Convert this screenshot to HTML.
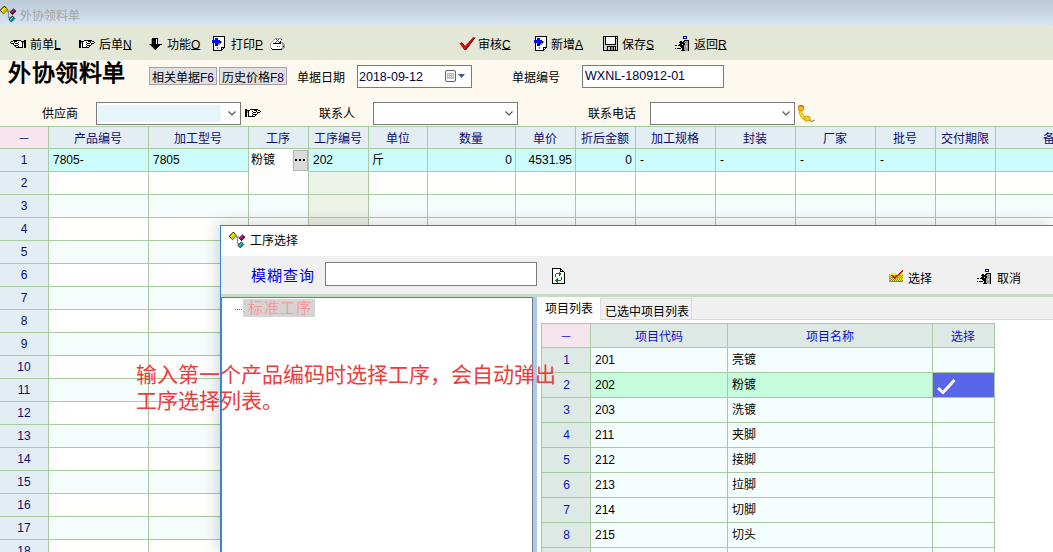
<!DOCTYPE html><html lang="zh-CN"><head><meta charset="utf-8"><style>
html,body{margin:0;padding:0;}body{width:1053px;height:552px;overflow:hidden;position:relative;background:#fff;font-family:"Liberation Sans",sans-serif;font-size:12px;color:#000;font-weight:500;}
u{text-decoration:underline;text-underline-offset:0px;}
</style></head><body>
<div style="position:absolute;left:0px;top:0px;width:1053px;height:26px;background:linear-gradient(#bbc9d8,#d8e4f1);"></div>
<svg style="position:absolute;left:0px;top:0px" width="17" height="23" viewBox="0 0 17 23" shape-rendering="crispEdges"><g shape-rendering="geometricPrecision" stroke="#000" stroke-width="1" stroke-linejoin="miter"><path d="M7 11.1 L10.9 11.1 M8.5 11.1 L8.5 17.4 L10 17.4" fill="none" stroke="#8a8a8a" stroke-width="1.2"/><path d="M4.4 6.1 L7.7 9.6 L3.5 13.7 L0.2 10.3 Z" fill="#f4ec00"/><path d="M6 7.8 L7.7 9.6 L3.5 13.7 L2 12 Z" fill="#c8c000" stroke="none"/><path d="M13.5 9 L15.9 11.3 L12.4 14.6 L10.3 12.2 Z" fill="#e010d0"/><path d="M14.7 10.2 L15.9 11.3 L12.4 14.6 L11.3 13.4 Z" fill="#a00020" stroke="none"/><path d="M12.4 16.1 L14.8 18.5 L11.3 21.8 L9 19.4 Z" fill="#10e0f0"/><path d="M13.6 17.3 L14.8 18.5 L11.3 21.8 L10.1 20.6 Z" fill="#109898" stroke="none"/></g></svg>
<div style="position:absolute;left:20px;top:9px;line-height:14px;white-space:nowrap;color:#a4a4a4;font-size:12px;">外协领料单</div>
<div style="position:absolute;left:0px;top:26px;width:1053px;height:34px;background:#e3e7d6;"></div>
<svg style="position:absolute;left:10px;top:40px" width="16" height="8" shape-rendering="crispEdges"><rect x="3" y="0" width="8" height="1" fill="#000000"/><rect x="14" y="0" width="2" height="1" fill="#000000"/><rect x="1" y="1" width="2" height="1" fill="#000000"/><rect x="3" y="1" width="1" height="1" fill="#ffffff"/><rect x="4" y="1" width="3" height="1" fill="#000000"/><rect x="7" y="1" width="4" height="1" fill="#ffffff"/><rect x="11" y="1" width="5" height="1" fill="#000000"/><rect x="0" y="2" width="1" height="1" fill="#000000"/><rect x="1" y="2" width="3" height="1" fill="#ffffff"/><rect x="4" y="2" width="1" height="1" fill="#000000"/><rect x="5" y="2" width="3" height="1" fill="#ffffff"/><rect x="8" y="2" width="1" height="1" fill="#000000"/><rect x="9" y="2" width="3" height="1" fill="#ffffff"/><rect x="12" y="2" width="1" height="1" fill="#000000"/><rect x="13" y="2" width="1" height="1" fill="#00e8f0"/><rect x="14" y="2" width="2" height="1" fill="#000000"/><rect x="1" y="3" width="3" height="1" fill="#000000"/><rect x="4" y="3" width="1" height="1" fill="#ffffff"/><rect x="5" y="3" width="3" height="1" fill="#000000"/><rect x="8" y="3" width="4" height="1" fill="#ffffff"/><rect x="12" y="3" width="1" height="1" fill="#000000"/><rect x="13" y="3" width="1" height="1" fill="#00e8f0"/><rect x="14" y="3" width="2" height="1" fill="#000000"/><rect x="3" y="4" width="1" height="1" fill="#000000"/><rect x="4" y="4" width="4" height="1" fill="#ffffff"/><rect x="8" y="4" width="1" height="1" fill="#000000"/><rect x="9" y="4" width="3" height="1" fill="#ffffff"/><rect x="12" y="4" width="1" height="1" fill="#000000"/><rect x="13" y="4" width="1" height="1" fill="#ffffff"/><rect x="14" y="4" width="2" height="1" fill="#000000"/><rect x="4" y="5" width="4" height="1" fill="#000000"/><rect x="8" y="5" width="4" height="1" fill="#ffffff"/><rect x="12" y="5" width="1" height="1" fill="#000000"/><rect x="13" y="5" width="1" height="1" fill="#ffffff"/><rect x="14" y="5" width="2" height="1" fill="#000000"/><rect x="5" y="6" width="1" height="1" fill="#000000"/><rect x="6" y="6" width="2" height="1" fill="#ffffff"/><rect x="8" y="6" width="1" height="1" fill="#000000"/><rect x="9" y="6" width="3" height="1" fill="#ffffff"/><rect x="12" y="6" width="1" height="1" fill="#000000"/><rect x="14" y="6" width="2" height="1" fill="#000000"/><rect x="6" y="7" width="7" height="1" fill="#000000"/><rect x="14" y="7" width="2" height="1" fill="#000000"/></svg>
<div style="position:absolute;left:30px;top:38px;line-height:14px;white-space:nowrap;">前单<u>L</u></div>
<svg style="position:absolute;left:79px;top:40px" width="16" height="8" shape-rendering="crispEdges"><rect x="0" y="0" width="2" height="1" fill="#000000"/><rect x="5" y="0" width="8" height="1" fill="#000000"/><rect x="0" y="1" width="5" height="1" fill="#000000"/><rect x="5" y="1" width="4" height="1" fill="#ffffff"/><rect x="9" y="1" width="3" height="1" fill="#000000"/><rect x="12" y="1" width="1" height="1" fill="#ffffff"/><rect x="13" y="1" width="2" height="1" fill="#000000"/><rect x="0" y="2" width="2" height="1" fill="#000000"/><rect x="2" y="2" width="1" height="1" fill="#00e8f0"/><rect x="3" y="2" width="1" height="1" fill="#000000"/><rect x="4" y="2" width="3" height="1" fill="#ffffff"/><rect x="7" y="2" width="1" height="1" fill="#000000"/><rect x="8" y="2" width="3" height="1" fill="#ffffff"/><rect x="11" y="2" width="1" height="1" fill="#000000"/><rect x="12" y="2" width="3" height="1" fill="#ffffff"/><rect x="15" y="2" width="1" height="1" fill="#000000"/><rect x="0" y="3" width="2" height="1" fill="#000000"/><rect x="2" y="3" width="1" height="1" fill="#00e8f0"/><rect x="3" y="3" width="1" height="1" fill="#000000"/><rect x="4" y="3" width="4" height="1" fill="#ffffff"/><rect x="8" y="3" width="3" height="1" fill="#000000"/><rect x="11" y="3" width="1" height="1" fill="#ffffff"/><rect x="12" y="3" width="3" height="1" fill="#000000"/><rect x="0" y="4" width="2" height="1" fill="#000000"/><rect x="2" y="4" width="1" height="1" fill="#ffffff"/><rect x="3" y="4" width="1" height="1" fill="#000000"/><rect x="4" y="4" width="3" height="1" fill="#ffffff"/><rect x="7" y="4" width="1" height="1" fill="#000000"/><rect x="8" y="4" width="4" height="1" fill="#ffffff"/><rect x="12" y="4" width="1" height="1" fill="#000000"/><rect x="0" y="5" width="2" height="1" fill="#000000"/><rect x="2" y="5" width="1" height="1" fill="#ffffff"/><rect x="3" y="5" width="1" height="1" fill="#000000"/><rect x="4" y="5" width="4" height="1" fill="#ffffff"/><rect x="8" y="5" width="4" height="1" fill="#000000"/><rect x="0" y="6" width="2" height="1" fill="#000000"/><rect x="3" y="6" width="1" height="1" fill="#000000"/><rect x="4" y="6" width="3" height="1" fill="#ffffff"/><rect x="7" y="6" width="1" height="1" fill="#000000"/><rect x="8" y="6" width="2" height="1" fill="#ffffff"/><rect x="10" y="6" width="1" height="1" fill="#000000"/><rect x="0" y="7" width="2" height="1" fill="#000000"/><rect x="3" y="7" width="7" height="1" fill="#000000"/></svg>
<div style="position:absolute;left:99px;top:38px;line-height:14px;white-space:nowrap;">后单<u>N</u></div>
<svg style="position:absolute;left:149px;top:38px" width="13" height="12" shape-rendering="crispEdges"><rect x="3" y="0" width="6" height="1" fill="#000000"/><rect x="2" y="1" width="1" height="1" fill="#a0a0a0"/><rect x="3" y="1" width="4" height="1" fill="#000000"/><rect x="7" y="1" width="1" height="1" fill="#ffffff"/><rect x="8" y="1" width="1" height="1" fill="#000000"/><rect x="2" y="2" width="1" height="1" fill="#a0a0a0"/><rect x="3" y="2" width="4" height="1" fill="#000000"/><rect x="7" y="2" width="1" height="1" fill="#ffffff"/><rect x="8" y="2" width="1" height="1" fill="#000000"/><rect x="2" y="3" width="1" height="1" fill="#a0a0a0"/><rect x="3" y="3" width="4" height="1" fill="#000000"/><rect x="7" y="3" width="1" height="1" fill="#ffffff"/><rect x="8" y="3" width="1" height="1" fill="#000000"/><rect x="2" y="4" width="1" height="1" fill="#a0a0a0"/><rect x="3" y="4" width="4" height="1" fill="#000000"/><rect x="7" y="4" width="1" height="1" fill="#ffffff"/><rect x="8" y="4" width="1" height="1" fill="#000000"/><rect x="2" y="5" width="1" height="1" fill="#a0a0a0"/><rect x="3" y="5" width="4" height="1" fill="#000000"/><rect x="7" y="5" width="1" height="1" fill="#ffffff"/><rect x="8" y="5" width="1" height="1" fill="#000000"/><rect x="0" y="6" width="1" height="1" fill="#909000"/><rect x="1" y="6" width="12" height="1" fill="#000000"/><rect x="1" y="7" width="1" height="1" fill="#a0a0a0"/><rect x="2" y="7" width="9" height="1" fill="#000000"/><rect x="11" y="7" width="1" height="1" fill="#ffffff"/><rect x="2" y="8" width="1" height="1" fill="#a0a0a0"/><rect x="3" y="8" width="7" height="1" fill="#000000"/><rect x="10" y="8" width="1" height="1" fill="#ffffff"/><rect x="3" y="9" width="1" height="1" fill="#a0a0a0"/><rect x="4" y="9" width="5" height="1" fill="#000000"/><rect x="9" y="9" width="1" height="1" fill="#ffffff"/><rect x="4" y="10" width="1" height="1" fill="#a0a0a0"/><rect x="5" y="10" width="3" height="1" fill="#000000"/><rect x="8" y="10" width="1" height="1" fill="#ffffff"/><rect x="5" y="11" width="1" height="1" fill="#a0a0a0"/><rect x="6" y="11" width="1" height="1" fill="#000000"/><rect x="7" y="11" width="1" height="1" fill="#ffffff"/></svg>
<div style="position:absolute;left:167px;top:38px;line-height:14px;white-space:nowrap;">功能<u>O</u></div>
<svg style="position:absolute;left:211px;top:36px" width="14" height="15" shape-rendering="crispEdges"><rect x="2" y="0" width="12" height="1" fill="#000000"/><rect x="2" y="1" width="1" height="1" fill="#000000"/><rect x="3" y="1" width="10" height="1" fill="#ffffff"/><rect x="13" y="1" width="1" height="1" fill="#000000"/><rect x="2" y="2" width="1" height="1" fill="#000000"/><rect x="3" y="2" width="1" height="1" fill="#ffffff"/><rect x="4" y="2" width="3" height="1" fill="#0010f0"/><rect x="7" y="2" width="6" height="1" fill="#ffffff"/><rect x="13" y="2" width="1" height="1" fill="#000000"/><rect x="2" y="3" width="1" height="1" fill="#000000"/><rect x="3" y="3" width="1" height="1" fill="#ffffff"/><rect x="4" y="3" width="3" height="1" fill="#0010f0"/><rect x="7" y="3" width="6" height="1" fill="#ffffff"/><rect x="13" y="3" width="1" height="1" fill="#000000"/><rect x="1" y="4" width="8" height="1" fill="#0010f0"/><rect x="9" y="4" width="4" height="1" fill="#ffffff"/><rect x="13" y="4" width="1" height="1" fill="#000000"/><rect x="1" y="5" width="8" height="1" fill="#0010f0"/><rect x="9" y="5" width="1" height="1" fill="#000000"/><rect x="10" y="5" width="1" height="1" fill="#a0a0a0"/><rect x="11" y="5" width="2" height="1" fill="#ffffff"/><rect x="13" y="5" width="1" height="1" fill="#000000"/><rect x="1" y="6" width="8" height="1" fill="#0010f0"/><rect x="9" y="6" width="1" height="1" fill="#000000"/><rect x="10" y="6" width="1" height="1" fill="#a0a0a0"/><rect x="11" y="6" width="2" height="1" fill="#ffffff"/><rect x="13" y="6" width="1" height="1" fill="#000000"/><rect x="2" y="7" width="1" height="1" fill="#000000"/><rect x="3" y="7" width="1" height="1" fill="#ffffff"/><rect x="4" y="7" width="3" height="1" fill="#0010f0"/><rect x="7" y="7" width="1" height="1" fill="#000000"/><rect x="8" y="7" width="2" height="1" fill="#a0a0a0"/><rect x="10" y="7" width="3" height="1" fill="#ffffff"/><rect x="13" y="7" width="1" height="1" fill="#000000"/><rect x="2" y="8" width="1" height="1" fill="#000000"/><rect x="3" y="8" width="1" height="1" fill="#ffffff"/><rect x="4" y="8" width="3" height="1" fill="#0010f0"/><rect x="7" y="8" width="2" height="1" fill="#a0a0a0"/><rect x="9" y="8" width="4" height="1" fill="#ffffff"/><rect x="13" y="8" width="1" height="1" fill="#000000"/><rect x="2" y="9" width="1" height="1" fill="#000000"/><rect x="3" y="9" width="1" height="1" fill="#ffffff"/><rect x="4" y="9" width="3" height="1" fill="#000000"/><rect x="7" y="9" width="6" height="1" fill="#ffffff"/><rect x="13" y="9" width="1" height="1" fill="#000000"/><rect x="2" y="10" width="1" height="1" fill="#000000"/><rect x="3" y="10" width="10" height="1" fill="#ffffff"/><rect x="13" y="10" width="1" height="1" fill="#000000"/><rect x="2" y="11" width="1" height="1" fill="#000000"/><rect x="3" y="11" width="2" height="1" fill="#ffffff"/><rect x="5" y="11" width="1" height="1" fill="#e0c0e0"/><rect x="6" y="11" width="1" height="1" fill="#10e010"/><rect x="7" y="11" width="1" height="1" fill="#e0c0e0"/><rect x="8" y="11" width="2" height="1" fill="#ffffff"/><rect x="10" y="11" width="4" height="1" fill="#000000"/><rect x="2" y="12" width="1" height="1" fill="#000000"/><rect x="3" y="12" width="3" height="1" fill="#ffffff"/><rect x="6" y="12" width="1" height="1" fill="#10e010"/><rect x="7" y="12" width="3" height="1" fill="#ffffff"/><rect x="10" y="12" width="1" height="1" fill="#000000"/><rect x="11" y="12" width="1" height="1" fill="#ffffff"/><rect x="12" y="12" width="1" height="1" fill="#000000"/><rect x="2" y="13" width="1" height="1" fill="#000000"/><rect x="3" y="13" width="7" height="1" fill="#ffffff"/><rect x="10" y="13" width="2" height="1" fill="#000000"/><rect x="2" y="14" width="9" height="1" fill="#000000"/></svg>
<div style="position:absolute;left:231px;top:38px;line-height:14px;white-space:nowrap;">打印<u>P</u></div>
<svg style="position:absolute;left:270px;top:38px" width="15" height="12" shape-rendering="crispEdges"><rect x="5" y="0" width="7" height="1" fill="#a0a0a0"/><rect x="4" y="1" width="1" height="1" fill="#a0a0a0"/><rect x="5" y="1" width="1" height="1" fill="#ffffff"/><rect x="6" y="1" width="1" height="1" fill="#f00000"/><rect x="7" y="1" width="1" height="1" fill="#ffffff"/><rect x="8" y="1" width="1" height="1" fill="#f00000"/><rect x="9" y="1" width="2" height="1" fill="#ffffff"/><rect x="11" y="1" width="1" height="1" fill="#000000"/><rect x="3" y="2" width="1" height="1" fill="#a0a0a0"/><rect x="4" y="2" width="3" height="1" fill="#ffffff"/><rect x="7" y="2" width="1" height="1" fill="#f00000"/><rect x="8" y="2" width="3" height="1" fill="#ffffff"/><rect x="2" y="3" width="1" height="1" fill="#a0a0a0"/><rect x="3" y="3" width="3" height="1" fill="#ffffff"/><rect x="6" y="3" width="1" height="1" fill="#f00000"/><rect x="7" y="3" width="1" height="1" fill="#ffffff"/><rect x="8" y="3" width="1" height="1" fill="#f00000"/><rect x="9" y="3" width="1" height="1" fill="#ffffff"/><rect x="10" y="3" width="1" height="1" fill="#000000"/><rect x="1" y="4" width="1" height="1" fill="#a0a0a0"/><rect x="2" y="4" width="3" height="1" fill="#ffffff"/><rect x="5" y="4" width="1" height="1" fill="#f00000"/><rect x="6" y="4" width="3" height="1" fill="#ffffff"/><rect x="9" y="4" width="1" height="1" fill="#f00000"/><rect x="10" y="4" width="1" height="1" fill="#000000"/><rect x="11" y="4" width="2" height="1" fill="#a0a0a0"/><rect x="0" y="5" width="1" height="1" fill="#a0a0a0"/><rect x="1" y="5" width="2" height="1" fill="#ffffff"/><rect x="3" y="5" width="8" height="1" fill="#000000"/><rect x="11" y="5" width="1" height="1" fill="#ffffff"/><rect x="12" y="5" width="2" height="1" fill="#a0a0a0"/><rect x="0" y="6" width="1" height="1" fill="#a0a0a0"/><rect x="1" y="6" width="11" height="1" fill="#ffffff"/><rect x="12" y="6" width="3" height="1" fill="#a0a0a0"/><rect x="0" y="7" width="1" height="1" fill="#a0a0a0"/><rect x="1" y="7" width="11" height="1" fill="#ffffff"/><rect x="12" y="7" width="3" height="1" fill="#a0a0a0"/><rect x="0" y="8" width="1" height="1" fill="#a0a0a0"/><rect x="1" y="8" width="6" height="1" fill="#ffffff"/><rect x="7" y="8" width="1" height="1" fill="#f00000"/><rect x="8" y="8" width="1" height="1" fill="#ffffff"/><rect x="9" y="8" width="1" height="1" fill="#f00000"/><rect x="10" y="8" width="2" height="1" fill="#ffffff"/><rect x="12" y="8" width="1" height="1" fill="#a0a0a0"/><rect x="13" y="8" width="1" height="1" fill="#000000"/><rect x="14" y="8" width="1" height="1" fill="#a0a0a0"/><rect x="0" y="9" width="1" height="1" fill="#a0a0a0"/><rect x="1" y="9" width="11" height="1" fill="#ffffff"/><rect x="12" y="9" width="3" height="1" fill="#a0a0a0"/><rect x="1" y="10" width="1" height="1" fill="#000000"/><rect x="2" y="10" width="9" height="1" fill="#ffffff"/><rect x="11" y="10" width="3" height="1" fill="#a0a0a0"/><rect x="2" y="11" width="10" height="1" fill="#000000"/><rect x="12" y="11" width="1" height="1" fill="#a0a0a0"/></svg>
<svg style="position:absolute;left:457px;top:35px" width="20" height="17" viewBox="0 0 20 17" shape-rendering="crispEdges"><g shape-rendering="geometricPrecision"><path d="M2.5 8.2 L4.2 7.6 L8 11 L16.2 2 L18 2.6 L8.6 15 L7.2 15 Z" fill="#f00000"/><path d="M18 2.6 L8.6 15" stroke="#000" stroke-width="1" fill="none"/><path d="M4.2 7.4 L7.5 10.5" stroke="#000" stroke-width="0.9" fill="none"/></g></svg>
<div style="position:absolute;left:478px;top:38px;line-height:14px;white-space:nowrap;">审核<u>C</u></div>
<svg style="position:absolute;left:533px;top:36px" width="14" height="15" shape-rendering="crispEdges"><rect x="2" y="0" width="12" height="1" fill="#000000"/><rect x="2" y="1" width="1" height="1" fill="#000000"/><rect x="3" y="1" width="10" height="1" fill="#ffffff"/><rect x="13" y="1" width="1" height="1" fill="#000000"/><rect x="2" y="2" width="1" height="1" fill="#000000"/><rect x="3" y="2" width="1" height="1" fill="#ffffff"/><rect x="4" y="2" width="3" height="1" fill="#0010f0"/><rect x="7" y="2" width="6" height="1" fill="#ffffff"/><rect x="13" y="2" width="1" height="1" fill="#000000"/><rect x="2" y="3" width="1" height="1" fill="#000000"/><rect x="3" y="3" width="1" height="1" fill="#ffffff"/><rect x="4" y="3" width="3" height="1" fill="#0010f0"/><rect x="7" y="3" width="6" height="1" fill="#ffffff"/><rect x="13" y="3" width="1" height="1" fill="#000000"/><rect x="1" y="4" width="8" height="1" fill="#0010f0"/><rect x="9" y="4" width="4" height="1" fill="#ffffff"/><rect x="13" y="4" width="1" height="1" fill="#000000"/><rect x="1" y="5" width="8" height="1" fill="#0010f0"/><rect x="9" y="5" width="1" height="1" fill="#000000"/><rect x="10" y="5" width="1" height="1" fill="#a0a0a0"/><rect x="11" y="5" width="2" height="1" fill="#ffffff"/><rect x="13" y="5" width="1" height="1" fill="#000000"/><rect x="1" y="6" width="8" height="1" fill="#0010f0"/><rect x="9" y="6" width="1" height="1" fill="#000000"/><rect x="10" y="6" width="1" height="1" fill="#a0a0a0"/><rect x="11" y="6" width="2" height="1" fill="#ffffff"/><rect x="13" y="6" width="1" height="1" fill="#000000"/><rect x="2" y="7" width="1" height="1" fill="#000000"/><rect x="3" y="7" width="1" height="1" fill="#ffffff"/><rect x="4" y="7" width="3" height="1" fill="#0010f0"/><rect x="7" y="7" width="1" height="1" fill="#000000"/><rect x="8" y="7" width="2" height="1" fill="#a0a0a0"/><rect x="10" y="7" width="3" height="1" fill="#ffffff"/><rect x="13" y="7" width="1" height="1" fill="#000000"/><rect x="2" y="8" width="1" height="1" fill="#000000"/><rect x="3" y="8" width="1" height="1" fill="#ffffff"/><rect x="4" y="8" width="3" height="1" fill="#0010f0"/><rect x="7" y="8" width="2" height="1" fill="#a0a0a0"/><rect x="9" y="8" width="4" height="1" fill="#ffffff"/><rect x="13" y="8" width="1" height="1" fill="#000000"/><rect x="2" y="9" width="1" height="1" fill="#000000"/><rect x="3" y="9" width="1" height="1" fill="#ffffff"/><rect x="4" y="9" width="3" height="1" fill="#000000"/><rect x="7" y="9" width="6" height="1" fill="#ffffff"/><rect x="13" y="9" width="1" height="1" fill="#000000"/><rect x="2" y="10" width="1" height="1" fill="#000000"/><rect x="3" y="10" width="10" height="1" fill="#ffffff"/><rect x="13" y="10" width="1" height="1" fill="#000000"/><rect x="2" y="11" width="1" height="1" fill="#000000"/><rect x="3" y="11" width="2" height="1" fill="#ffffff"/><rect x="5" y="11" width="1" height="1" fill="#e0c0e0"/><rect x="6" y="11" width="1" height="1" fill="#10e010"/><rect x="7" y="11" width="1" height="1" fill="#e0c0e0"/><rect x="8" y="11" width="2" height="1" fill="#ffffff"/><rect x="10" y="11" width="4" height="1" fill="#000000"/><rect x="2" y="12" width="1" height="1" fill="#000000"/><rect x="3" y="12" width="3" height="1" fill="#ffffff"/><rect x="6" y="12" width="1" height="1" fill="#10e010"/><rect x="7" y="12" width="3" height="1" fill="#ffffff"/><rect x="10" y="12" width="1" height="1" fill="#000000"/><rect x="11" y="12" width="1" height="1" fill="#ffffff"/><rect x="12" y="12" width="1" height="1" fill="#000000"/><rect x="2" y="13" width="1" height="1" fill="#000000"/><rect x="3" y="13" width="7" height="1" fill="#ffffff"/><rect x="10" y="13" width="2" height="1" fill="#000000"/><rect x="2" y="14" width="9" height="1" fill="#000000"/></svg>
<div style="position:absolute;left:551px;top:38px;line-height:14px;white-space:nowrap;">新增<u>A</u></div>
<svg style="position:absolute;left:603px;top:36px" width="15" height="15" shape-rendering="crispEdges"><rect x="0" y="0" width="15" height="1" fill="#000000"/><rect x="0" y="1" width="1" height="1" fill="#000000"/><rect x="1" y="1" width="1" height="1" fill="#d0d0d0"/><rect x="2" y="1" width="1" height="1" fill="#000000"/><rect x="3" y="1" width="9" height="1" fill="#ffffff"/><rect x="12" y="1" width="1" height="1" fill="#000000"/><rect x="13" y="1" width="1" height="1" fill="#ffffff"/><rect x="14" y="1" width="1" height="1" fill="#000000"/><rect x="0" y="2" width="1" height="1" fill="#000000"/><rect x="1" y="2" width="1" height="1" fill="#d0d0d0"/><rect x="2" y="2" width="1" height="1" fill="#000000"/><rect x="3" y="2" width="9" height="1" fill="#ffffff"/><rect x="12" y="2" width="3" height="1" fill="#000000"/><rect x="0" y="3" width="1" height="1" fill="#000000"/><rect x="1" y="3" width="1" height="1" fill="#d0d0d0"/><rect x="2" y="3" width="1" height="1" fill="#000000"/><rect x="3" y="3" width="9" height="1" fill="#ffffff"/><rect x="12" y="3" width="1" height="1" fill="#000000"/><rect x="13" y="3" width="1" height="1" fill="#d0d0d0"/><rect x="14" y="3" width="1" height="1" fill="#000000"/><rect x="0" y="4" width="1" height="1" fill="#000000"/><rect x="1" y="4" width="1" height="1" fill="#d0d0d0"/><rect x="2" y="4" width="1" height="1" fill="#000000"/><rect x="3" y="4" width="9" height="1" fill="#ffffff"/><rect x="12" y="4" width="1" height="1" fill="#000000"/><rect x="13" y="4" width="1" height="1" fill="#d0d0d0"/><rect x="14" y="4" width="1" height="1" fill="#000000"/><rect x="0" y="5" width="1" height="1" fill="#000000"/><rect x="1" y="5" width="1" height="1" fill="#d0d0d0"/><rect x="2" y="5" width="1" height="1" fill="#000000"/><rect x="3" y="5" width="9" height="1" fill="#ffffff"/><rect x="12" y="5" width="1" height="1" fill="#000000"/><rect x="13" y="5" width="1" height="1" fill="#d0d0d0"/><rect x="14" y="5" width="1" height="1" fill="#000000"/><rect x="0" y="6" width="1" height="1" fill="#000000"/><rect x="1" y="6" width="1" height="1" fill="#d0d0d0"/><rect x="2" y="6" width="1" height="1" fill="#000000"/><rect x="3" y="6" width="9" height="1" fill="#ffffff"/><rect x="12" y="6" width="1" height="1" fill="#000000"/><rect x="13" y="6" width="1" height="1" fill="#d0d0d0"/><rect x="14" y="6" width="1" height="1" fill="#000000"/><rect x="0" y="7" width="1" height="1" fill="#000000"/><rect x="1" y="7" width="1" height="1" fill="#d0d0d0"/><rect x="2" y="7" width="1" height="1" fill="#000000"/><rect x="3" y="7" width="9" height="1" fill="#ffffff"/><rect x="12" y="7" width="1" height="1" fill="#000000"/><rect x="13" y="7" width="1" height="1" fill="#d0d0d0"/><rect x="14" y="7" width="1" height="1" fill="#000000"/><rect x="0" y="8" width="1" height="1" fill="#000000"/><rect x="1" y="8" width="1" height="1" fill="#d0d0d0"/><rect x="2" y="8" width="11" height="1" fill="#000000"/><rect x="13" y="8" width="1" height="1" fill="#d0d0d0"/><rect x="14" y="8" width="1" height="1" fill="#000000"/><rect x="0" y="9" width="1" height="1" fill="#000000"/><rect x="1" y="9" width="13" height="1" fill="#d0d0d0"/><rect x="14" y="9" width="1" height="1" fill="#000000"/><rect x="0" y="10" width="1" height="1" fill="#000000"/><rect x="1" y="10" width="3" height="1" fill="#d0d0d0"/><rect x="4" y="10" width="9" height="1" fill="#000000"/><rect x="13" y="10" width="1" height="1" fill="#d0d0d0"/><rect x="14" y="10" width="1" height="1" fill="#000000"/><rect x="0" y="11" width="1" height="1" fill="#000000"/><rect x="1" y="11" width="3" height="1" fill="#d0d0d0"/><rect x="4" y="11" width="1" height="1" fill="#000000"/><rect x="5" y="11" width="2" height="1" fill="#d0d0d0"/><rect x="7" y="11" width="1" height="1" fill="#000000"/><rect x="8" y="11" width="2" height="1" fill="#909090"/><rect x="10" y="11" width="1" height="1" fill="#000000"/><rect x="11" y="11" width="1" height="1" fill="#d0d0d0"/><rect x="12" y="11" width="1" height="1" fill="#000000"/><rect x="13" y="11" width="1" height="1" fill="#d0d0d0"/><rect x="14" y="11" width="1" height="1" fill="#000000"/><rect x="0" y="12" width="1" height="1" fill="#000000"/><rect x="1" y="12" width="3" height="1" fill="#d0d0d0"/><rect x="4" y="12" width="1" height="1" fill="#000000"/><rect x="5" y="12" width="2" height="1" fill="#d0d0d0"/><rect x="7" y="12" width="1" height="1" fill="#000000"/><rect x="8" y="12" width="2" height="1" fill="#909090"/><rect x="10" y="12" width="1" height="1" fill="#000000"/><rect x="11" y="12" width="1" height="1" fill="#d0d0d0"/><rect x="12" y="12" width="1" height="1" fill="#000000"/><rect x="13" y="12" width="1" height="1" fill="#d0d0d0"/><rect x="14" y="12" width="1" height="1" fill="#000000"/><rect x="0" y="13" width="1" height="1" fill="#000000"/><rect x="1" y="13" width="3" height="1" fill="#d0d0d0"/><rect x="4" y="13" width="1" height="1" fill="#000000"/><rect x="5" y="13" width="2" height="1" fill="#d0d0d0"/><rect x="7" y="13" width="1" height="1" fill="#000000"/><rect x="8" y="13" width="2" height="1" fill="#909090"/><rect x="10" y="13" width="1" height="1" fill="#000000"/><rect x="11" y="13" width="1" height="1" fill="#d0d0d0"/><rect x="12" y="13" width="1" height="1" fill="#000000"/><rect x="13" y="13" width="1" height="1" fill="#d0d0d0"/><rect x="14" y="13" width="1" height="1" fill="#000000"/><rect x="0" y="14" width="15" height="1" fill="#000000"/></svg>
<div style="position:absolute;left:622px;top:38px;line-height:14px;white-space:nowrap;">保存<u>S</u></div>
<svg style="position:absolute;left:675px;top:36px" width="14" height="15" shape-rendering="crispEdges"><rect x="8" y="0" width="4" height="1" fill="#000090"/><rect x="8" y="1" width="1" height="1" fill="#000090"/><rect x="9" y="1" width="2" height="1" fill="#ffffff"/><rect x="11" y="1" width="1" height="1" fill="#000090"/><rect x="8" y="2" width="4" height="1" fill="#000090"/><rect x="9" y="4" width="5" height="1" fill="#000000"/><rect x="5" y="5" width="2" height="1" fill="#000000"/><rect x="8" y="5" width="2" height="1" fill="#000000"/><rect x="10" y="5" width="3" height="1" fill="#a0a0a0"/><rect x="13" y="5" width="1" height="1" fill="#000000"/><rect x="4" y="6" width="5" height="1" fill="#000000"/><rect x="9" y="6" width="4" height="1" fill="#a0a0a0"/><rect x="13" y="6" width="1" height="1" fill="#000000"/><rect x="5" y="7" width="5" height="1" fill="#000000"/><rect x="10" y="7" width="3" height="1" fill="#a0a0a0"/><rect x="13" y="7" width="1" height="1" fill="#000000"/><rect x="4" y="8" width="3" height="1" fill="#000000"/><rect x="8" y="8" width="2" height="1" fill="#000000"/><rect x="10" y="8" width="3" height="1" fill="#a0a0a0"/><rect x="13" y="8" width="1" height="1" fill="#000000"/><rect x="0" y="9" width="2" height="1" fill="#000000"/><rect x="3" y="9" width="6" height="1" fill="#000000"/><rect x="9" y="9" width="4" height="1" fill="#a0a0a0"/><rect x="13" y="9" width="1" height="1" fill="#000000"/><rect x="5" y="10" width="4" height="1" fill="#000000"/><rect x="9" y="10" width="2" height="1" fill="#a0a0a0"/><rect x="11" y="10" width="1" height="1" fill="#ffffff"/><rect x="12" y="10" width="1" height="1" fill="#a0a0a0"/><rect x="13" y="10" width="1" height="1" fill="#000000"/><rect x="6" y="11" width="3" height="1" fill="#000000"/><rect x="9" y="11" width="4" height="1" fill="#a0a0a0"/><rect x="13" y="11" width="1" height="1" fill="#000000"/><rect x="0" y="12" width="1" height="1" fill="#000000"/><rect x="2" y="12" width="4" height="1" fill="#000000"/><rect x="7" y="12" width="2" height="1" fill="#000000"/><rect x="9" y="12" width="4" height="1" fill="#a0a0a0"/><rect x="13" y="12" width="1" height="1" fill="#000000"/><rect x="7" y="13" width="2" height="1" fill="#000000"/><rect x="9" y="13" width="4" height="1" fill="#a0a0a0"/><rect x="13" y="13" width="1" height="1" fill="#000000"/><rect x="6" y="14" width="4" height="1" fill="#000000"/><rect x="10" y="14" width="3" height="1" fill="#a0a0a0"/><rect x="13" y="14" width="1" height="1" fill="#000000"/></svg>
<div style="position:absolute;left:694px;top:38px;line-height:14px;white-space:nowrap;">返回<u>R</u></div>
<div style="position:absolute;left:0px;top:60px;width:1053px;height:66px;background:#fdf9ee;"></div>
<div style="position:absolute;left:8px;top:59px;line-height:28px;white-space:nowrap;font-size:23px;font-weight:700;letter-spacing:0.6px;font-family:"Liberation Serif",serif;">外协领料单</div>
<div style="position:absolute;left:149px;top:67px;width:66px;height:16px;border:1px solid #a4a4a4;background:#e1e1e1;"></div>
<div style="position:absolute;left:152px;top:71px;line-height:14px;white-space:nowrap;">相关单据<span style="color:#000060">F6</span></div>
<div style="position:absolute;left:219px;top:67px;width:66px;height:16px;border:1px solid #a4a4a4;background:#e1e1e1;"></div>
<div style="position:absolute;left:222px;top:71px;line-height:14px;white-space:nowrap;">历史价格<span style="color:#000060">F8</span></div>
<div style="position:absolute;left:297px;top:71px;line-height:14px;white-space:nowrap;">单据日期</div>
<div style="position:absolute;left:357px;top:65px;width:113px;height:21px;border:1px solid #7a7a7a;background:#fff;"></div>
<div style="position:absolute;left:359px;top:70px;line-height:14px;white-space:nowrap;color:#000040;font-size:12.5px;">2018-09-12</div>
<svg style="position:absolute;left:445px;top:70px" width="12" height="12" viewBox="0 0 12 12" shape-rendering="crispEdges"><rect x="0.5" y="0.5" width="10" height="11" rx="1.5" fill="#f6f8fc" stroke="#6a5a58" stroke-width="1" shape-rendering="geometricPrecision"/><rect x="2" y="3" width="7" height="6" fill="#b8bcc8"/><rect x="3" y="4" width="1" height="1" fill="#f0f0f0"/><rect x="5" y="4" width="1" height="1" fill="#f0f0f0"/><rect x="7" y="4" width="1" height="1" fill="#f0f0f0"/><rect x="3" y="6" width="1" height="1" fill="#f0f0f0"/><rect x="5" y="6" width="1" height="1" fill="#f0f0f0"/><rect x="7" y="6" width="1" height="1" fill="#f0f0f0"/><rect x="3" y="8" width="1" height="1" fill="#e0e0e0"/><rect x="5" y="8" width="1" height="1" fill="#e0e0e0"/></svg>
<svg style="position:absolute;left:458px;top:74px" width="8" height="5" viewBox="0 0 8 5" shape-rendering="crispEdges"><path d="M0 0 L7 0 L3.5 4 Z" fill="#3a5488" shape-rendering="geometricPrecision"/></svg>
<div style="position:absolute;left:512px;top:71px;line-height:14px;white-space:nowrap;">单据编号</div>
<div style="position:absolute;left:582px;top:65px;width:140px;height:21px;border:1px solid #7a7a7a;background:#fff;"></div>
<div style="position:absolute;left:585px;top:69px;line-height:14px;white-space:nowrap;color:#000040;font-size:12.5px;">WXNL-180912-01</div>
<div style="position:absolute;left:42px;top:107px;line-height:14px;white-space:nowrap;">供应商</div>
<div style="position:absolute;left:96px;top:102px;width:143px;height:21px;border:1px solid #7a7a7a;background:#fff;"></div>
<div style="position:absolute;left:98px;top:105px;width:123px;height:17px;background:#e6f5fc;"></div>
<svg style="position:absolute;left:228px;top:111px" width="8" height="5" viewBox="0 0 8 5" shape-rendering="crispEdges"><path d="M0.5 0.5 L4 4 L7.5 0.5" fill="none" stroke="#555" stroke-width="1.2" shape-rendering="geometricPrecision"/></svg>
<svg style="position:absolute;left:245px;top:109px" width="16" height="8" shape-rendering="crispEdges"><rect x="0" y="0" width="2" height="1" fill="#000000"/><rect x="5" y="0" width="8" height="1" fill="#000000"/><rect x="0" y="1" width="5" height="1" fill="#000000"/><rect x="5" y="1" width="4" height="1" fill="#ffffff"/><rect x="9" y="1" width="3" height="1" fill="#000000"/><rect x="12" y="1" width="1" height="1" fill="#ffffff"/><rect x="13" y="1" width="2" height="1" fill="#000000"/><rect x="0" y="2" width="2" height="1" fill="#000000"/><rect x="2" y="2" width="1" height="1" fill="#00e8f0"/><rect x="3" y="2" width="1" height="1" fill="#000000"/><rect x="4" y="2" width="3" height="1" fill="#ffffff"/><rect x="7" y="2" width="1" height="1" fill="#000000"/><rect x="8" y="2" width="3" height="1" fill="#ffffff"/><rect x="11" y="2" width="1" height="1" fill="#000000"/><rect x="12" y="2" width="3" height="1" fill="#ffffff"/><rect x="15" y="2" width="1" height="1" fill="#000000"/><rect x="0" y="3" width="2" height="1" fill="#000000"/><rect x="2" y="3" width="1" height="1" fill="#00e8f0"/><rect x="3" y="3" width="1" height="1" fill="#000000"/><rect x="4" y="3" width="4" height="1" fill="#ffffff"/><rect x="8" y="3" width="3" height="1" fill="#000000"/><rect x="11" y="3" width="1" height="1" fill="#ffffff"/><rect x="12" y="3" width="3" height="1" fill="#000000"/><rect x="0" y="4" width="2" height="1" fill="#000000"/><rect x="2" y="4" width="1" height="1" fill="#ffffff"/><rect x="3" y="4" width="1" height="1" fill="#000000"/><rect x="4" y="4" width="3" height="1" fill="#ffffff"/><rect x="7" y="4" width="1" height="1" fill="#000000"/><rect x="8" y="4" width="4" height="1" fill="#ffffff"/><rect x="12" y="4" width="1" height="1" fill="#000000"/><rect x="0" y="5" width="2" height="1" fill="#000000"/><rect x="2" y="5" width="1" height="1" fill="#ffffff"/><rect x="3" y="5" width="1" height="1" fill="#000000"/><rect x="4" y="5" width="4" height="1" fill="#ffffff"/><rect x="8" y="5" width="4" height="1" fill="#000000"/><rect x="0" y="6" width="2" height="1" fill="#000000"/><rect x="3" y="6" width="1" height="1" fill="#000000"/><rect x="4" y="6" width="3" height="1" fill="#ffffff"/><rect x="7" y="6" width="1" height="1" fill="#000000"/><rect x="8" y="6" width="2" height="1" fill="#ffffff"/><rect x="10" y="6" width="1" height="1" fill="#000000"/><rect x="0" y="7" width="2" height="1" fill="#000000"/><rect x="3" y="7" width="7" height="1" fill="#000000"/></svg>
<div style="position:absolute;left:319px;top:107px;line-height:14px;white-space:nowrap;">联系人</div>
<div style="position:absolute;left:373px;top:102px;width:143px;height:21px;border:1px solid #7a7a7a;background:#fff;"></div>
<svg style="position:absolute;left:505px;top:111px" width="8" height="5" viewBox="0 0 8 5" shape-rendering="crispEdges"><path d="M0.5 0.5 L4 4 L7.5 0.5" fill="none" stroke="#555" stroke-width="1.2" shape-rendering="geometricPrecision"/></svg>
<div style="position:absolute;left:588px;top:107px;line-height:14px;white-space:nowrap;">联系电话</div>
<div style="position:absolute;left:650px;top:102px;width:143px;height:21px;border:1px solid #7a7a7a;background:#fff;"></div>
<svg style="position:absolute;left:782px;top:111px" width="8" height="5" viewBox="0 0 8 5" shape-rendering="crispEdges"><path d="M0.5 0.5 L4 4 L7.5 0.5" fill="none" stroke="#555" stroke-width="1.2" shape-rendering="geometricPrecision"/></svg>
<svg style="position:absolute;left:798px;top:105px" width="17" height="17" viewBox="0 0 17 17" shape-rendering="crispEdges"><g shape-rendering="geometricPrecision"><path d="M11 15.5 Q14 17.5 16.8 15" fill="none" stroke="#6a6a6a" stroke-width="1"/><path d="M2.5 5 Q2 11 8.5 14.5" fill="none" stroke="#d8a000" stroke-width="3.6"/><path d="M2.5 5 Q2 11 8.5 14.5" fill="none" stroke="#f8e010" stroke-width="2"/><ellipse cx="3" cy="3.2" rx="2.8" ry="2.6" fill="#f4c800" stroke="#d07000" stroke-width="0.8"/><path d="M1 2 Q3 -0.5 5.5 2" fill="none" stroke="#e04010" stroke-width="1.2"/><ellipse cx="9.3" cy="13.6" rx="3" ry="2.6" fill="#f4d000" stroke="#c89000" stroke-width="0.8"/></g></svg>
<div style="position:absolute;left:0px;top:127px;width:1053px;height:21px;background:#e2eef4;"></div>
<div style="position:absolute;left:0px;top:127px;width:48px;height:21px;background:#f8e4ee;"></div>
<div style="position:absolute;left:0px;top:132px;line-height:14px;white-space:nowrap;width:48px;text-align:center;color:#0c0c6e;">－</div>
<div style="position:absolute;left:48px;top:132px;line-height:14px;white-space:nowrap;width:100px;text-align:center;color:#0c0c6e;">产品编号</div>
<div style="position:absolute;left:148px;top:132px;line-height:14px;white-space:nowrap;width:100px;text-align:center;color:#0c0c6e;">加工型号</div>
<div style="position:absolute;left:248px;top:132px;line-height:14px;white-space:nowrap;width:60px;text-align:center;color:#0c0c6e;">工序</div>
<div style="position:absolute;left:308px;top:132px;line-height:14px;white-space:nowrap;width:60px;text-align:center;color:#0c0c6e;">工序编号</div>
<div style="position:absolute;left:368px;top:132px;line-height:14px;white-space:nowrap;width:59px;text-align:center;color:#0c0c6e;">单位</div>
<div style="position:absolute;left:427px;top:132px;line-height:14px;white-space:nowrap;width:88px;text-align:center;color:#0c0c6e;">数量</div>
<div style="position:absolute;left:515px;top:132px;line-height:14px;white-space:nowrap;width:60px;text-align:center;color:#0c0c6e;">单价</div>
<div style="position:absolute;left:575px;top:132px;line-height:14px;white-space:nowrap;width:60px;text-align:center;color:#0c0c6e;">折后金额</div>
<div style="position:absolute;left:635px;top:132px;line-height:14px;white-space:nowrap;width:80px;text-align:center;color:#0c0c6e;">加工规格</div>
<div style="position:absolute;left:715px;top:132px;line-height:14px;white-space:nowrap;width:80px;text-align:center;color:#0c0c6e;">封装</div>
<div style="position:absolute;left:795px;top:132px;line-height:14px;white-space:nowrap;width:80px;text-align:center;color:#0c0c6e;">厂家</div>
<div style="position:absolute;left:875px;top:132px;line-height:14px;white-space:nowrap;width:60px;text-align:center;color:#0c0c6e;">批号</div>
<div style="position:absolute;left:935px;top:132px;line-height:14px;white-space:nowrap;width:60px;text-align:center;color:#0c0c6e;">交付期限</div>
<div style="position:absolute;left:995px;top:132px;line-height:14px;white-space:nowrap;width:120px;text-align:center;color:#0c0c6e;">备注</div>
<div style="position:absolute;left:48px;top:149px;width:1005px;height:22px;background:#ccfcfc;"></div>
<div style="position:absolute;left:0px;top:149px;width:48px;height:22px;background:#e2eef4;"></div>
<div style="position:absolute;left:0px;top:153px;line-height:14px;white-space:nowrap;width:48px;text-align:center;color:#0c0c6e;">1</div>
<div style="position:absolute;left:48px;top:172px;width:1005px;height:22px;background:#fffffe;"></div>
<div style="position:absolute;left:0px;top:172px;width:48px;height:22px;background:#e2eef4;"></div>
<div style="position:absolute;left:309px;top:172px;width:59px;height:22px;background:#edf2e7;"></div>
<div style="position:absolute;left:0px;top:176px;line-height:14px;white-space:nowrap;width:48px;text-align:center;color:#0c0c6e;">2</div>
<div style="position:absolute;left:48px;top:195px;width:1005px;height:22px;background:#f4fcfc;"></div>
<div style="position:absolute;left:0px;top:195px;width:48px;height:22px;background:#e2eef4;"></div>
<div style="position:absolute;left:309px;top:195px;width:59px;height:22px;background:#edf2e7;"></div>
<div style="position:absolute;left:0px;top:199px;line-height:14px;white-space:nowrap;width:48px;text-align:center;color:#0c0c6e;">3</div>
<div style="position:absolute;left:48px;top:218px;width:1005px;height:22px;background:#fffffe;"></div>
<div style="position:absolute;left:0px;top:218px;width:48px;height:22px;background:#e2eef4;"></div>
<div style="position:absolute;left:309px;top:218px;width:59px;height:22px;background:#edf2e7;"></div>
<div style="position:absolute;left:0px;top:222px;line-height:14px;white-space:nowrap;width:48px;text-align:center;color:#0c0c6e;">4</div>
<div style="position:absolute;left:48px;top:241px;width:1005px;height:22px;background:#f4fcfc;"></div>
<div style="position:absolute;left:0px;top:241px;width:48px;height:22px;background:#e2eef4;"></div>
<div style="position:absolute;left:309px;top:241px;width:59px;height:22px;background:#edf2e7;"></div>
<div style="position:absolute;left:0px;top:245px;line-height:14px;white-space:nowrap;width:48px;text-align:center;color:#0c0c6e;">5</div>
<div style="position:absolute;left:48px;top:264px;width:1005px;height:22px;background:#fffffe;"></div>
<div style="position:absolute;left:0px;top:264px;width:48px;height:22px;background:#e2eef4;"></div>
<div style="position:absolute;left:309px;top:264px;width:59px;height:22px;background:#edf2e7;"></div>
<div style="position:absolute;left:0px;top:268px;line-height:14px;white-space:nowrap;width:48px;text-align:center;color:#0c0c6e;">6</div>
<div style="position:absolute;left:48px;top:287px;width:1005px;height:22px;background:#f4fcfc;"></div>
<div style="position:absolute;left:0px;top:287px;width:48px;height:22px;background:#e2eef4;"></div>
<div style="position:absolute;left:309px;top:287px;width:59px;height:22px;background:#edf2e7;"></div>
<div style="position:absolute;left:0px;top:291px;line-height:14px;white-space:nowrap;width:48px;text-align:center;color:#0c0c6e;">7</div>
<div style="position:absolute;left:48px;top:310px;width:1005px;height:22px;background:#fffffe;"></div>
<div style="position:absolute;left:0px;top:310px;width:48px;height:22px;background:#e2eef4;"></div>
<div style="position:absolute;left:309px;top:310px;width:59px;height:22px;background:#edf2e7;"></div>
<div style="position:absolute;left:0px;top:314px;line-height:14px;white-space:nowrap;width:48px;text-align:center;color:#0c0c6e;">8</div>
<div style="position:absolute;left:48px;top:333px;width:1005px;height:22px;background:#f4fcfc;"></div>
<div style="position:absolute;left:0px;top:333px;width:48px;height:22px;background:#e2eef4;"></div>
<div style="position:absolute;left:309px;top:333px;width:59px;height:22px;background:#edf2e7;"></div>
<div style="position:absolute;left:0px;top:337px;line-height:14px;white-space:nowrap;width:48px;text-align:center;color:#0c0c6e;">9</div>
<div style="position:absolute;left:48px;top:356px;width:1005px;height:22px;background:#fffffe;"></div>
<div style="position:absolute;left:0px;top:356px;width:48px;height:22px;background:#e2eef4;"></div>
<div style="position:absolute;left:309px;top:356px;width:59px;height:22px;background:#edf2e7;"></div>
<div style="position:absolute;left:0px;top:360px;line-height:14px;white-space:nowrap;width:48px;text-align:center;color:#0c0c6e;">10</div>
<div style="position:absolute;left:48px;top:379px;width:1005px;height:22px;background:#f4fcfc;"></div>
<div style="position:absolute;left:0px;top:379px;width:48px;height:22px;background:#e2eef4;"></div>
<div style="position:absolute;left:309px;top:379px;width:59px;height:22px;background:#edf2e7;"></div>
<div style="position:absolute;left:0px;top:383px;line-height:14px;white-space:nowrap;width:48px;text-align:center;color:#0c0c6e;">11</div>
<div style="position:absolute;left:48px;top:402px;width:1005px;height:22px;background:#fffffe;"></div>
<div style="position:absolute;left:0px;top:402px;width:48px;height:22px;background:#e2eef4;"></div>
<div style="position:absolute;left:309px;top:402px;width:59px;height:22px;background:#edf2e7;"></div>
<div style="position:absolute;left:0px;top:406px;line-height:14px;white-space:nowrap;width:48px;text-align:center;color:#0c0c6e;">12</div>
<div style="position:absolute;left:48px;top:425px;width:1005px;height:22px;background:#f4fcfc;"></div>
<div style="position:absolute;left:0px;top:425px;width:48px;height:22px;background:#e2eef4;"></div>
<div style="position:absolute;left:309px;top:425px;width:59px;height:22px;background:#edf2e7;"></div>
<div style="position:absolute;left:0px;top:429px;line-height:14px;white-space:nowrap;width:48px;text-align:center;color:#0c0c6e;">13</div>
<div style="position:absolute;left:48px;top:448px;width:1005px;height:22px;background:#fffffe;"></div>
<div style="position:absolute;left:0px;top:448px;width:48px;height:22px;background:#e2eef4;"></div>
<div style="position:absolute;left:309px;top:448px;width:59px;height:22px;background:#edf2e7;"></div>
<div style="position:absolute;left:0px;top:452px;line-height:14px;white-space:nowrap;width:48px;text-align:center;color:#0c0c6e;">14</div>
<div style="position:absolute;left:48px;top:471px;width:1005px;height:22px;background:#f4fcfc;"></div>
<div style="position:absolute;left:0px;top:471px;width:48px;height:22px;background:#e2eef4;"></div>
<div style="position:absolute;left:309px;top:471px;width:59px;height:22px;background:#edf2e7;"></div>
<div style="position:absolute;left:0px;top:475px;line-height:14px;white-space:nowrap;width:48px;text-align:center;color:#0c0c6e;">15</div>
<div style="position:absolute;left:48px;top:494px;width:1005px;height:22px;background:#fffffe;"></div>
<div style="position:absolute;left:0px;top:494px;width:48px;height:22px;background:#e2eef4;"></div>
<div style="position:absolute;left:309px;top:494px;width:59px;height:22px;background:#edf2e7;"></div>
<div style="position:absolute;left:0px;top:498px;line-height:14px;white-space:nowrap;width:48px;text-align:center;color:#0c0c6e;">16</div>
<div style="position:absolute;left:48px;top:517px;width:1005px;height:22px;background:#f4fcfc;"></div>
<div style="position:absolute;left:0px;top:517px;width:48px;height:22px;background:#e2eef4;"></div>
<div style="position:absolute;left:309px;top:517px;width:59px;height:22px;background:#edf2e7;"></div>
<div style="position:absolute;left:0px;top:521px;line-height:14px;white-space:nowrap;width:48px;text-align:center;color:#0c0c6e;">17</div>
<div style="position:absolute;left:48px;top:540px;width:1005px;height:22px;background:#fffffe;"></div>
<div style="position:absolute;left:0px;top:540px;width:48px;height:22px;background:#e2eef4;"></div>
<div style="position:absolute;left:309px;top:540px;width:59px;height:22px;background:#edf2e7;"></div>
<div style="position:absolute;left:0px;top:544px;line-height:14px;white-space:nowrap;width:48px;text-align:center;color:#0c0c6e;">18</div>
<div style="position:absolute;left:249px;top:149px;width:59px;height:45px;background:#fefefe;"></div>
<div style="position:absolute;left:0px;top:126px;width:1053px;height:1px;background:#a9c9a1;"></div>
<div style="position:absolute;left:0px;top:148px;width:1053px;height:1px;background:#a9c9a1;"></div>
<div style="position:absolute;left:0px;top:171px;width:249px;height:1px;background:#a9c9a1;"></div>
<div style="position:absolute;left:308px;top:171px;width:745px;height:1px;background:#a9c9a1;"></div>
<div style="position:absolute;left:0px;top:194px;width:1053px;height:1px;background:#a9c9a1;"></div>
<div style="position:absolute;left:0px;top:217px;width:1053px;height:1px;background:#a9c9a1;"></div>
<div style="position:absolute;left:0px;top:240px;width:1053px;height:1px;background:#a9c9a1;"></div>
<div style="position:absolute;left:0px;top:263px;width:1053px;height:1px;background:#a9c9a1;"></div>
<div style="position:absolute;left:0px;top:286px;width:1053px;height:1px;background:#a9c9a1;"></div>
<div style="position:absolute;left:0px;top:309px;width:1053px;height:1px;background:#a9c9a1;"></div>
<div style="position:absolute;left:0px;top:332px;width:1053px;height:1px;background:#a9c9a1;"></div>
<div style="position:absolute;left:0px;top:355px;width:1053px;height:1px;background:#a9c9a1;"></div>
<div style="position:absolute;left:0px;top:378px;width:1053px;height:1px;background:#a9c9a1;"></div>
<div style="position:absolute;left:0px;top:401px;width:1053px;height:1px;background:#a9c9a1;"></div>
<div style="position:absolute;left:0px;top:424px;width:1053px;height:1px;background:#a9c9a1;"></div>
<div style="position:absolute;left:0px;top:447px;width:1053px;height:1px;background:#a9c9a1;"></div>
<div style="position:absolute;left:0px;top:470px;width:1053px;height:1px;background:#a9c9a1;"></div>
<div style="position:absolute;left:0px;top:493px;width:1053px;height:1px;background:#a9c9a1;"></div>
<div style="position:absolute;left:0px;top:516px;width:1053px;height:1px;background:#a9c9a1;"></div>
<div style="position:absolute;left:0px;top:539px;width:1053px;height:1px;background:#a9c9a1;"></div>
<div style="position:absolute;left:0px;top:562px;width:1053px;height:1px;background:#a9c9a1;"></div>
<div style="position:absolute;left:48px;top:127px;width:1px;height:425px;background:#a9c9a1;"></div>
<div style="position:absolute;left:148px;top:127px;width:1px;height:425px;background:#a9c9a1;"></div>
<div style="position:absolute;left:248px;top:127px;width:1px;height:425px;background:#a9c9a1;"></div>
<div style="position:absolute;left:308px;top:127px;width:1px;height:425px;background:#a9c9a1;"></div>
<div style="position:absolute;left:368px;top:127px;width:1px;height:425px;background:#a9c9a1;"></div>
<div style="position:absolute;left:427px;top:127px;width:1px;height:425px;background:#a9c9a1;"></div>
<div style="position:absolute;left:515px;top:127px;width:1px;height:425px;background:#a9c9a1;"></div>
<div style="position:absolute;left:575px;top:127px;width:1px;height:425px;background:#a9c9a1;"></div>
<div style="position:absolute;left:635px;top:127px;width:1px;height:425px;background:#a9c9a1;"></div>
<div style="position:absolute;left:715px;top:127px;width:1px;height:425px;background:#a9c9a1;"></div>
<div style="position:absolute;left:795px;top:127px;width:1px;height:425px;background:#a9c9a1;"></div>
<div style="position:absolute;left:875px;top:127px;width:1px;height:425px;background:#a9c9a1;"></div>
<div style="position:absolute;left:935px;top:127px;width:1px;height:425px;background:#a9c9a1;"></div>
<div style="position:absolute;left:995px;top:127px;width:1px;height:425px;background:#a9c9a1;"></div>
<div style="position:absolute;left:53px;top:153px;line-height:14px;white-space:nowrap;">7805-</div>
<div style="position:absolute;left:153px;top:153px;line-height:14px;white-space:nowrap;">7805</div>
<div style="position:absolute;left:251px;top:153px;line-height:14px;white-space:nowrap;">粉镀</div>
<div style="position:absolute;left:293px;top:150px;width:13px;height:19px;border:1px solid #b4b4b4;background:#dadada;"></div>
<svg style="position:absolute;left:295px;top:159px" width="10" height="2" viewBox="0 0 10 2" shape-rendering="crispEdges"><rect x="0" y="0" width="2" height="2" fill="#000"/><rect x="4" y="0" width="2" height="2" fill="#000"/><rect x="8" y="0" width="2" height="2" fill="#000"/></svg>
<div style="position:absolute;left:313px;top:153px;line-height:14px;white-space:nowrap;">202</div>
<div style="position:absolute;left:372px;top:153px;line-height:14px;white-space:nowrap;">斤</div>
<div style="position:absolute;right:541px;top:153px;line-height:14px;white-space:nowrap;">0</div>
<div style="position:absolute;right:481px;top:153px;line-height:14px;white-space:nowrap;">4531.95</div>
<div style="position:absolute;right:421px;top:153px;line-height:14px;white-space:nowrap;">0</div>
<div style="position:absolute;left:640px;top:153px;line-height:14px;white-space:nowrap;">-</div>
<div style="position:absolute;left:720px;top:153px;line-height:14px;white-space:nowrap;">-</div>
<div style="position:absolute;left:800px;top:153px;line-height:14px;white-space:nowrap;">-</div>
<div style="position:absolute;left:880px;top:153px;line-height:14px;white-space:nowrap;">-</div>
<div style="position:absolute;left:220px;top:225px;width:833px;height:327px;box-shadow:-3px -2px 14px rgba(0,0,0,0.16);background:#fff;border-left:1px solid #2f84d8;border-top:1px solid #2f84d8;box-sizing:border-box;"></div>
<svg style="position:absolute;left:229px;top:226px" width="17" height="23" viewBox="0 0 17 23" shape-rendering="crispEdges"><g shape-rendering="geometricPrecision" stroke="#000" stroke-width="1" stroke-linejoin="miter"><path d="M7 11.1 L10.9 11.1 M8.5 11.1 L8.5 17.4 L10 17.4" fill="none" stroke="#8a8a8a" stroke-width="1.2"/><path d="M4.4 6.1 L7.7 9.6 L3.5 13.7 L0.2 10.3 Z" fill="#f4ec00"/><path d="M6 7.8 L7.7 9.6 L3.5 13.7 L2 12 Z" fill="#c8c000" stroke="none"/><path d="M13.5 9 L15.9 11.3 L12.4 14.6 L10.3 12.2 Z" fill="#e010d0"/><path d="M14.7 10.2 L15.9 11.3 L12.4 14.6 L11.3 13.4 Z" fill="#a00020" stroke="none"/><path d="M12.4 16.1 L14.8 18.5 L11.3 21.8 L9 19.4 Z" fill="#10e0f0"/><path d="M13.6 17.3 L14.8 18.5 L11.3 21.8 L10.1 20.6 Z" fill="#109898" stroke="none"/></g></svg>
<div style="position:absolute;left:250px;top:234px;line-height:14px;white-space:nowrap;">工序选择</div>
<div style="position:absolute;left:221px;top:256px;width:832px;height:38px;background:#f0f0f0;"></div>
<div style="position:absolute;left:251px;top:268px;line-height:16px;white-space:nowrap;color:#0000e8;font-size:15px;letter-spacing:1px;font-weight:400;">模糊查询</div>
<div style="position:absolute;left:325px;top:262px;width:212px;height:24px;border:1px solid #7a7a7a;background:#fff;box-sizing:border-box;"></div>
<svg style="position:absolute;left:552px;top:268px" width="13" height="16" shape-rendering="crispEdges"><rect x="0" y="0" width="9" height="1" fill="#000000"/><rect x="0" y="1" width="1" height="1" fill="#000000"/><rect x="1" y="1" width="7" height="1" fill="#ffffff"/><rect x="8" y="1" width="2" height="1" fill="#000000"/><rect x="0" y="2" width="1" height="1" fill="#000000"/><rect x="1" y="2" width="7" height="1" fill="#ffffff"/><rect x="8" y="2" width="1" height="1" fill="#000000"/><rect x="9" y="2" width="1" height="1" fill="#ffffff"/><rect x="10" y="2" width="1" height="1" fill="#000000"/><rect x="0" y="3" width="1" height="1" fill="#000000"/><rect x="1" y="3" width="7" height="1" fill="#ffffff"/><rect x="8" y="3" width="4" height="1" fill="#000000"/><rect x="0" y="4" width="1" height="1" fill="#000000"/><rect x="1" y="4" width="6" height="1" fill="#ffffff"/><rect x="7" y="4" width="1" height="1" fill="#008000"/><rect x="8" y="4" width="4" height="1" fill="#ffffff"/><rect x="12" y="4" width="1" height="1" fill="#000000"/><rect x="0" y="5" width="1" height="1" fill="#000000"/><rect x="1" y="5" width="3" height="1" fill="#ffffff"/><rect x="4" y="5" width="5" height="1" fill="#008000"/><rect x="9" y="5" width="3" height="1" fill="#ffffff"/><rect x="12" y="5" width="1" height="1" fill="#000000"/><rect x="0" y="6" width="1" height="1" fill="#000000"/><rect x="1" y="6" width="2" height="1" fill="#ffffff"/><rect x="3" y="6" width="1" height="1" fill="#008000"/><rect x="4" y="6" width="3" height="1" fill="#ffffff"/><rect x="7" y="6" width="2" height="1" fill="#008000"/><rect x="9" y="6" width="3" height="1" fill="#ffffff"/><rect x="12" y="6" width="1" height="1" fill="#000000"/><rect x="0" y="7" width="1" height="1" fill="#000000"/><rect x="1" y="7" width="2" height="1" fill="#ffffff"/><rect x="3" y="7" width="1" height="1" fill="#008000"/><rect x="4" y="7" width="3" height="1" fill="#ffffff"/><rect x="7" y="7" width="1" height="1" fill="#008000"/><rect x="8" y="7" width="4" height="1" fill="#ffffff"/><rect x="12" y="7" width="1" height="1" fill="#000000"/><rect x="0" y="8" width="1" height="1" fill="#000000"/><rect x="1" y="8" width="2" height="1" fill="#ffffff"/><rect x="3" y="8" width="1" height="1" fill="#008000"/><rect x="4" y="8" width="8" height="1" fill="#ffffff"/><rect x="12" y="8" width="1" height="1" fill="#000000"/><rect x="0" y="9" width="1" height="1" fill="#000000"/><rect x="1" y="9" width="8" height="1" fill="#ffffff"/><rect x="9" y="9" width="1" height="1" fill="#008000"/><rect x="10" y="9" width="2" height="1" fill="#ffffff"/><rect x="12" y="9" width="1" height="1" fill="#000000"/><rect x="0" y="10" width="1" height="1" fill="#000000"/><rect x="1" y="10" width="4" height="1" fill="#ffffff"/><rect x="5" y="10" width="1" height="1" fill="#008000"/><rect x="6" y="10" width="3" height="1" fill="#ffffff"/><rect x="9" y="10" width="1" height="1" fill="#008000"/><rect x="10" y="10" width="2" height="1" fill="#ffffff"/><rect x="12" y="10" width="1" height="1" fill="#000000"/><rect x="0" y="11" width="1" height="1" fill="#000000"/><rect x="1" y="11" width="3" height="1" fill="#ffffff"/><rect x="4" y="11" width="2" height="1" fill="#008000"/><rect x="6" y="11" width="3" height="1" fill="#ffffff"/><rect x="9" y="11" width="1" height="1" fill="#008000"/><rect x="10" y="11" width="2" height="1" fill="#ffffff"/><rect x="12" y="11" width="1" height="1" fill="#000000"/><rect x="0" y="12" width="1" height="1" fill="#000000"/><rect x="1" y="12" width="2" height="1" fill="#ffffff"/><rect x="3" y="12" width="6" height="1" fill="#008000"/><rect x="9" y="12" width="3" height="1" fill="#ffffff"/><rect x="12" y="12" width="1" height="1" fill="#000000"/><rect x="0" y="13" width="1" height="1" fill="#000000"/><rect x="1" y="13" width="3" height="1" fill="#ffffff"/><rect x="4" y="13" width="2" height="1" fill="#008000"/><rect x="6" y="13" width="6" height="1" fill="#ffffff"/><rect x="12" y="13" width="1" height="1" fill="#000000"/><rect x="0" y="14" width="1" height="1" fill="#000000"/><rect x="1" y="14" width="4" height="1" fill="#ffffff"/><rect x="5" y="14" width="1" height="1" fill="#008000"/><rect x="6" y="14" width="6" height="1" fill="#ffffff"/><rect x="12" y="14" width="1" height="1" fill="#000000"/><rect x="0" y="15" width="13" height="1" fill="#000000"/></svg>
<svg style="position:absolute;left:889px;top:270px" width="14" height="12" shape-rendering="crispEdges"><rect x="13" y="0" width="1" height="1" fill="#f00000"/><rect x="12" y="1" width="2" height="1" fill="#f00000"/><rect x="11" y="2" width="2" height="1" fill="#f00000"/><rect x="2" y="3" width="5" height="1" fill="#f0f000"/><rect x="10" y="3" width="2" height="1" fill="#f00000"/><rect x="0" y="4" width="1" height="1" fill="#a0a0a0"/><rect x="1" y="4" width="8" height="1" fill="#f0f000"/><rect x="9" y="4" width="2" height="1" fill="#f00000"/><rect x="11" y="4" width="3" height="1" fill="#f0f000"/><rect x="0" y="5" width="1" height="1" fill="#a0a0a0"/><rect x="1" y="5" width="1" height="1" fill="#f0f000"/><rect x="2" y="5" width="2" height="1" fill="#f00000"/><rect x="4" y="5" width="1" height="1" fill="#909000"/><rect x="5" y="5" width="1" height="1" fill="#f0f000"/><rect x="6" y="5" width="1" height="1" fill="#909000"/><rect x="7" y="5" width="2" height="1" fill="#f00000"/><rect x="9" y="5" width="1" height="1" fill="#909000"/><rect x="10" y="5" width="1" height="1" fill="#f0f000"/><rect x="11" y="5" width="1" height="1" fill="#909000"/><rect x="12" y="5" width="1" height="1" fill="#f0f000"/><rect x="13" y="5" width="1" height="1" fill="#909000"/><rect x="0" y="6" width="1" height="1" fill="#a0a0a0"/><rect x="1" y="6" width="1" height="1" fill="#909000"/><rect x="2" y="6" width="1" height="1" fill="#f0f000"/><rect x="3" y="6" width="2" height="1" fill="#f00000"/><rect x="5" y="6" width="1" height="1" fill="#909000"/><rect x="6" y="6" width="2" height="1" fill="#f00000"/><rect x="8" y="6" width="1" height="1" fill="#909000"/><rect x="9" y="6" width="1" height="1" fill="#f0f000"/><rect x="10" y="6" width="1" height="1" fill="#909000"/><rect x="11" y="6" width="1" height="1" fill="#f0f000"/><rect x="12" y="6" width="1" height="1" fill="#909000"/><rect x="13" y="6" width="1" height="1" fill="#f0f000"/><rect x="0" y="7" width="1" height="1" fill="#a0a0a0"/><rect x="1" y="7" width="1" height="1" fill="#f0f000"/><rect x="2" y="7" width="1" height="1" fill="#909000"/><rect x="3" y="7" width="1" height="1" fill="#f0f000"/><rect x="4" y="7" width="3" height="1" fill="#f00000"/><rect x="7" y="7" width="1" height="1" fill="#909000"/><rect x="8" y="7" width="1" height="1" fill="#f0f000"/><rect x="9" y="7" width="1" height="1" fill="#909000"/><rect x="10" y="7" width="1" height="1" fill="#f0f000"/><rect x="11" y="7" width="1" height="1" fill="#909000"/><rect x="12" y="7" width="1" height="1" fill="#f0f000"/><rect x="13" y="7" width="1" height="1" fill="#909000"/><rect x="0" y="8" width="1" height="1" fill="#a0a0a0"/><rect x="1" y="8" width="1" height="1" fill="#909000"/><rect x="2" y="8" width="1" height="1" fill="#f0f000"/><rect x="3" y="8" width="1" height="1" fill="#909000"/><rect x="4" y="8" width="1" height="1" fill="#f0f000"/><rect x="5" y="8" width="1" height="1" fill="#f00000"/><rect x="6" y="8" width="1" height="1" fill="#909000"/><rect x="7" y="8" width="1" height="1" fill="#f0f000"/><rect x="8" y="8" width="1" height="1" fill="#909000"/><rect x="9" y="8" width="1" height="1" fill="#f0f000"/><rect x="10" y="8" width="1" height="1" fill="#909000"/><rect x="11" y="8" width="1" height="1" fill="#f0f000"/><rect x="12" y="8" width="1" height="1" fill="#909000"/><rect x="13" y="8" width="1" height="1" fill="#f0f000"/><rect x="0" y="9" width="1" height="1" fill="#a0a0a0"/><rect x="1" y="9" width="1" height="1" fill="#f0f000"/><rect x="2" y="9" width="1" height="1" fill="#909000"/><rect x="3" y="9" width="1" height="1" fill="#f0f000"/><rect x="4" y="9" width="1" height="1" fill="#909000"/><rect x="5" y="9" width="1" height="1" fill="#f0f000"/><rect x="6" y="9" width="1" height="1" fill="#909000"/><rect x="7" y="9" width="1" height="1" fill="#f0f000"/><rect x="8" y="9" width="1" height="1" fill="#909000"/><rect x="9" y="9" width="1" height="1" fill="#f0f000"/><rect x="10" y="9" width="1" height="1" fill="#909000"/><rect x="11" y="9" width="1" height="1" fill="#f0f000"/><rect x="12" y="9" width="1" height="1" fill="#909000"/><rect x="13" y="9" width="1" height="1" fill="#f0f000"/><rect x="0" y="10" width="1" height="1" fill="#a0a0a0"/><rect x="1" y="10" width="1" height="1" fill="#909000"/><rect x="2" y="10" width="1" height="1" fill="#f0f000"/><rect x="3" y="10" width="1" height="1" fill="#909000"/><rect x="4" y="10" width="1" height="1" fill="#f0f000"/><rect x="5" y="10" width="1" height="1" fill="#909000"/><rect x="6" y="10" width="1" height="1" fill="#f0f000"/><rect x="7" y="10" width="1" height="1" fill="#909000"/><rect x="8" y="10" width="1" height="1" fill="#f0f000"/><rect x="9" y="10" width="1" height="1" fill="#909000"/><rect x="10" y="10" width="1" height="1" fill="#f0f000"/><rect x="11" y="10" width="1" height="1" fill="#909000"/><rect x="12" y="10" width="1" height="1" fill="#f0f000"/><rect x="13" y="10" width="1" height="1" fill="#909000"/><rect x="0" y="11" width="1" height="1" fill="#a0a0a0"/><rect x="1" y="11" width="13" height="1" fill="#909000"/></svg>
<div style="position:absolute;left:908px;top:272px;line-height:14px;white-space:nowrap;">选择</div>
<svg style="position:absolute;left:977px;top:269px" width="14" height="15" shape-rendering="crispEdges"><rect x="8" y="0" width="4" height="1" fill="#000090"/><rect x="8" y="1" width="1" height="1" fill="#000090"/><rect x="9" y="1" width="2" height="1" fill="#ffffff"/><rect x="11" y="1" width="1" height="1" fill="#000090"/><rect x="8" y="2" width="4" height="1" fill="#000090"/><rect x="9" y="4" width="5" height="1" fill="#000000"/><rect x="5" y="5" width="2" height="1" fill="#000000"/><rect x="8" y="5" width="2" height="1" fill="#000000"/><rect x="10" y="5" width="3" height="1" fill="#a0a0a0"/><rect x="13" y="5" width="1" height="1" fill="#000000"/><rect x="4" y="6" width="5" height="1" fill="#000000"/><rect x="9" y="6" width="4" height="1" fill="#a0a0a0"/><rect x="13" y="6" width="1" height="1" fill="#000000"/><rect x="5" y="7" width="5" height="1" fill="#000000"/><rect x="10" y="7" width="3" height="1" fill="#a0a0a0"/><rect x="13" y="7" width="1" height="1" fill="#000000"/><rect x="4" y="8" width="3" height="1" fill="#000000"/><rect x="8" y="8" width="2" height="1" fill="#000000"/><rect x="10" y="8" width="3" height="1" fill="#a0a0a0"/><rect x="13" y="8" width="1" height="1" fill="#000000"/><rect x="0" y="9" width="2" height="1" fill="#000000"/><rect x="3" y="9" width="6" height="1" fill="#000000"/><rect x="9" y="9" width="4" height="1" fill="#a0a0a0"/><rect x="13" y="9" width="1" height="1" fill="#000000"/><rect x="5" y="10" width="4" height="1" fill="#000000"/><rect x="9" y="10" width="2" height="1" fill="#a0a0a0"/><rect x="11" y="10" width="1" height="1" fill="#ffffff"/><rect x="12" y="10" width="1" height="1" fill="#a0a0a0"/><rect x="13" y="10" width="1" height="1" fill="#000000"/><rect x="6" y="11" width="3" height="1" fill="#000000"/><rect x="9" y="11" width="4" height="1" fill="#a0a0a0"/><rect x="13" y="11" width="1" height="1" fill="#000000"/><rect x="0" y="12" width="1" height="1" fill="#000000"/><rect x="2" y="12" width="4" height="1" fill="#000000"/><rect x="7" y="12" width="2" height="1" fill="#000000"/><rect x="9" y="12" width="4" height="1" fill="#a0a0a0"/><rect x="13" y="12" width="1" height="1" fill="#000000"/><rect x="7" y="13" width="2" height="1" fill="#000000"/><rect x="9" y="13" width="4" height="1" fill="#a0a0a0"/><rect x="13" y="13" width="1" height="1" fill="#000000"/><rect x="6" y="14" width="4" height="1" fill="#000000"/><rect x="10" y="14" width="3" height="1" fill="#a0a0a0"/><rect x="13" y="14" width="1" height="1" fill="#000000"/></svg>
<div style="position:absolute;left:997px;top:272px;line-height:14px;white-space:nowrap;">取消</div>
<div style="position:absolute;left:221px;top:294px;width:832px;height:3px;background:#c4dcc4;"></div>
<div style="position:absolute;left:221px;top:297px;width:312px;height:255px;border-left:1px solid #787c88;border-top:1px solid #787c88;border-right:1px solid #787c88;background:#fff;box-sizing:border-box;"></div>
<svg style="position:absolute;left:235px;top:309px" width="10" height="1" viewBox="0 0 10 1" shape-rendering="crispEdges"><rect x="0" y="0" width="1" height="1" fill="#666"/><rect x="2" y="0" width="1" height="1" fill="#666"/><rect x="4" y="0" width="1" height="1" fill="#666"/><rect x="6" y="0" width="1" height="1" fill="#666"/><rect x="8" y="0" width="1" height="1" fill="#666"/></svg>
<div style="position:absolute;left:243px;top:299px;width:72px;height:18px;background:#d4d4d4;"></div>
<div style="position:absolute;left:248px;top:300px;line-height:16px;white-space:nowrap;color:#f49a9a;font-size:15px;letter-spacing:1px;font-weight:300;">标准工序</div>
<div style="position:absolute;left:533px;top:297px;width:4px;height:255px;background:#a9c9f1;"></div>
<div style="position:absolute;left:537px;top:297px;width:516px;height:23px;background:#f0f0f0;"></div>
<div style="position:absolute;left:537px;top:319px;width:516px;height:1px;background:#d9d9d9;"></div>
<div style="position:absolute;left:537px;top:297px;width:63px;height:23px;background:#fff;"></div>
<div style="position:absolute;left:600px;top:298px;width:92px;height:21px;background:#f0f0f0;border:1px solid #dcdcdc;border-bottom:none;box-sizing:border-box;"></div>
<div style="position:absolute;left:545px;top:302px;line-height:14px;white-space:nowrap;">项目列表</div>
<div style="position:absolute;left:605px;top:305px;line-height:14px;white-space:nowrap;">已选中项目列表</div>
<div style="position:absolute;left:541px;top:323px;width:454px;height:24px;background:#dde9e5;"></div>
<div style="position:absolute;left:542px;top:324px;width:48px;height:23px;background:#f4e4ee;"></div>
<div style="position:absolute;left:541px;top:330px;line-height:14px;white-space:nowrap;width:49px;text-align:center;color:#1010c8;">－</div>
<div style="position:absolute;left:590px;top:330px;line-height:14px;white-space:nowrap;width:137px;text-align:center;color:#1010c8;">项目代码</div>
<div style="position:absolute;left:727px;top:330px;line-height:14px;white-space:nowrap;width:205px;text-align:center;color:#1010c8;">项目名称</div>
<div style="position:absolute;left:932px;top:330px;line-height:14px;white-space:nowrap;width:62px;text-align:center;color:#1010c8;">选择</div>
<div style="position:absolute;left:591px;top:348px;width:403px;height:24px;background:#f4fefe;"></div>
<div style="position:absolute;left:542px;top:348px;width:48px;height:24px;background:#dde9e5;"></div>
<div style="position:absolute;left:542px;top:353px;line-height:14px;white-space:nowrap;width:49px;text-align:center;color:#1010c8;">1</div>
<div style="position:absolute;left:595px;top:353px;line-height:14px;white-space:nowrap;">201</div>
<div style="position:absolute;left:732px;top:353px;line-height:14px;white-space:nowrap;">亮镀</div>
<div style="position:absolute;left:591px;top:373px;width:403px;height:24px;background:#c4fcdc;"></div>
<div style="position:absolute;left:542px;top:373px;width:48px;height:24px;background:#dde9e5;"></div>
<div style="position:absolute;left:542px;top:378px;line-height:14px;white-space:nowrap;width:49px;text-align:center;color:#1010c8;">2</div>
<div style="position:absolute;left:595px;top:378px;line-height:14px;white-space:nowrap;">202</div>
<div style="position:absolute;left:732px;top:378px;line-height:14px;white-space:nowrap;">粉镀</div>
<div style="position:absolute;left:591px;top:398px;width:403px;height:24px;background:#f4fefe;"></div>
<div style="position:absolute;left:542px;top:398px;width:48px;height:24px;background:#dde9e5;"></div>
<div style="position:absolute;left:542px;top:403px;line-height:14px;white-space:nowrap;width:49px;text-align:center;color:#1010c8;">3</div>
<div style="position:absolute;left:595px;top:403px;line-height:14px;white-space:nowrap;">203</div>
<div style="position:absolute;left:732px;top:403px;line-height:14px;white-space:nowrap;">洗镀</div>
<div style="position:absolute;left:591px;top:423px;width:403px;height:24px;background:#f4fefe;"></div>
<div style="position:absolute;left:542px;top:423px;width:48px;height:24px;background:#dde9e5;"></div>
<div style="position:absolute;left:542px;top:428px;line-height:14px;white-space:nowrap;width:49px;text-align:center;color:#1010c8;">4</div>
<div style="position:absolute;left:595px;top:428px;line-height:14px;white-space:nowrap;">211</div>
<div style="position:absolute;left:732px;top:428px;line-height:14px;white-space:nowrap;">夹脚</div>
<div style="position:absolute;left:591px;top:448px;width:403px;height:24px;background:#f4fefe;"></div>
<div style="position:absolute;left:542px;top:448px;width:48px;height:24px;background:#dde9e5;"></div>
<div style="position:absolute;left:542px;top:453px;line-height:14px;white-space:nowrap;width:49px;text-align:center;color:#1010c8;">5</div>
<div style="position:absolute;left:595px;top:453px;line-height:14px;white-space:nowrap;">212</div>
<div style="position:absolute;left:732px;top:453px;line-height:14px;white-space:nowrap;">接脚</div>
<div style="position:absolute;left:591px;top:473px;width:403px;height:24px;background:#f4fefe;"></div>
<div style="position:absolute;left:542px;top:473px;width:48px;height:24px;background:#dde9e5;"></div>
<div style="position:absolute;left:542px;top:478px;line-height:14px;white-space:nowrap;width:49px;text-align:center;color:#1010c8;">6</div>
<div style="position:absolute;left:595px;top:478px;line-height:14px;white-space:nowrap;">213</div>
<div style="position:absolute;left:732px;top:478px;line-height:14px;white-space:nowrap;">拉脚</div>
<div style="position:absolute;left:591px;top:498px;width:403px;height:24px;background:#f4fefe;"></div>
<div style="position:absolute;left:542px;top:498px;width:48px;height:24px;background:#dde9e5;"></div>
<div style="position:absolute;left:542px;top:503px;line-height:14px;white-space:nowrap;width:49px;text-align:center;color:#1010c8;">7</div>
<div style="position:absolute;left:595px;top:503px;line-height:14px;white-space:nowrap;">214</div>
<div style="position:absolute;left:732px;top:503px;line-height:14px;white-space:nowrap;">切脚</div>
<div style="position:absolute;left:591px;top:523px;width:403px;height:24px;background:#f4fefe;"></div>
<div style="position:absolute;left:542px;top:523px;width:48px;height:24px;background:#dde9e5;"></div>
<div style="position:absolute;left:542px;top:528px;line-height:14px;white-space:nowrap;width:49px;text-align:center;color:#1010c8;">8</div>
<div style="position:absolute;left:595px;top:528px;line-height:14px;white-space:nowrap;">215</div>
<div style="position:absolute;left:732px;top:528px;line-height:14px;white-space:nowrap;">切头</div>
<div style="position:absolute;left:591px;top:548px;width:403px;height:24px;background:#f4fefe;"></div>
<div style="position:absolute;left:542px;top:548px;width:48px;height:24px;background:#dde9e5;"></div>
<div style="position:absolute;left:933px;top:373px;width:61px;height:24px;background:#5a66ea;"></div>
<svg style="position:absolute;left:930px;top:370px" width="30" height="30" viewBox="0 0 30 30" shape-rendering="crispEdges"><path d="M8 18 L13 22.5 L24.5 10" fill="none" stroke="#fff" stroke-width="3" shape-rendering="geometricPrecision"/></svg>
<div style="position:absolute;left:541px;top:323px;width:454px;height:1px;background:#a9c9a1;"></div>
<div style="position:absolute;left:541px;top:347px;width:454px;height:1px;background:#a9c9a1;"></div>
<div style="position:absolute;left:541px;top:372px;width:454px;height:1px;background:#a9c9a1;"></div>
<div style="position:absolute;left:541px;top:397px;width:454px;height:1px;background:#a9c9a1;"></div>
<div style="position:absolute;left:541px;top:422px;width:454px;height:1px;background:#a9c9a1;"></div>
<div style="position:absolute;left:541px;top:447px;width:454px;height:1px;background:#a9c9a1;"></div>
<div style="position:absolute;left:541px;top:472px;width:454px;height:1px;background:#a9c9a1;"></div>
<div style="position:absolute;left:541px;top:497px;width:454px;height:1px;background:#a9c9a1;"></div>
<div style="position:absolute;left:541px;top:522px;width:454px;height:1px;background:#a9c9a1;"></div>
<div style="position:absolute;left:541px;top:547px;width:454px;height:1px;background:#a9c9a1;"></div>
<div style="position:absolute;left:541px;top:572px;width:454px;height:1px;background:#a9c9a1;"></div>
<div style="position:absolute;left:541px;top:323px;width:1px;height:229px;background:#a9c9a1;"></div>
<div style="position:absolute;left:590px;top:323px;width:1px;height:229px;background:#a9c9a1;"></div>
<div style="position:absolute;left:727px;top:323px;width:1px;height:229px;background:#a9c9a1;"></div>
<div style="position:absolute;left:932px;top:323px;width:1px;height:229px;background:#a9c9a1;"></div>
<div style="position:absolute;left:994px;top:323px;width:1px;height:229px;background:#a9c9a1;"></div>
<div style="position:absolute;left:136px;top:362px;line-height:26px;white-space:nowrap;color:#ee3a3a;font-size:21px;font-weight:300;font-family:"Liberation Serif",serif;letter-spacing:-0.2px;">输入第一个产品编码时选择工序，会自动弹出</div>
<div style="position:absolute;left:136px;top:388px;line-height:26px;white-space:nowrap;color:#ee3a3a;font-size:21px;font-weight:300;font-family:"Liberation Serif",serif;letter-spacing:-0.2px;">工序选择列表。</div>
</body></html>
